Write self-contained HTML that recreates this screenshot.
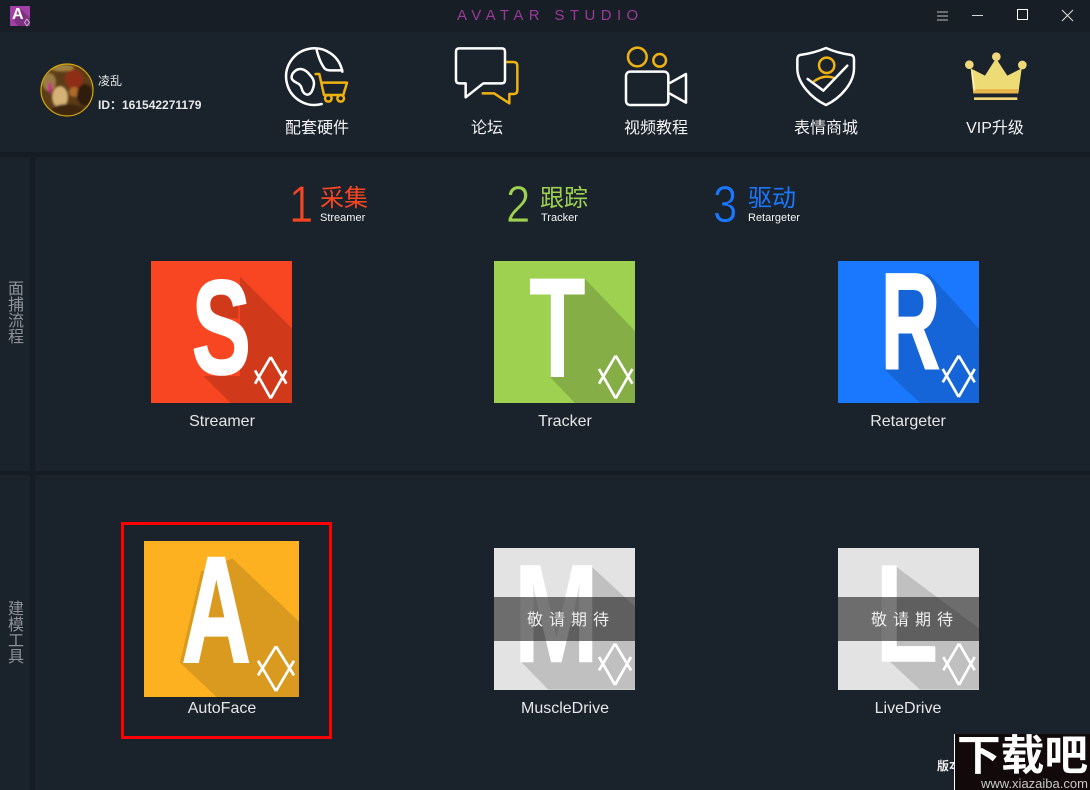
<!DOCTYPE html>
<html lang="zh">
<head>
<meta charset="utf-8">
<title>AVATAR STUDIO</title>
<style>
html,body{margin:0;padding:0;background:#1a222c;}
#app{position:relative;width:1090px;height:790px;overflow:hidden;background:#1a222c;font-family:"Liberation Sans","Noto Sans CJK SC",sans-serif;color:#f0f0f0;}
.a{position:absolute;white-space:nowrap;}
.nav{top:119px;width:120px;text-align:center;font-size:16px;line-height:20px;color:#f2f2f2;}
.lbl{width:160px;text-align:center;font-size:16px;line-height:20px;color:#e6e6e6;}
.side{left:8px;width:16px;font-size:16px;line-height:16px;color:#8f9396;white-space:normal;text-align:center;}
.num{font-size:52px;line-height:52px;top:179px;transform:scaleX(.84);transform-origin:0 0;-webkit-text-stroke:.8px #1a222c;}
.cn{font-size:24px;line-height:28px;top:185px;}
.sub{font-size:11px;line-height:13px;top:212px;color:#f5f5f5;}
.soon{font-size:16px;line-height:20px;color:#eee;letter-spacing:6px;top:611px;}
svg{position:absolute;left:0;top:0;}
</style>
</head>
<body>
<div id="app">
<svg width="1090" height="790" viewBox="0 0 1090 790" fill="none">
  <defs>
    <filter id="b" x="-30%" y="-30%" width="160%" height="160%"><feGaussianBlur stdDeviation="1.1"/></filter>
    <clipPath id="av"><circle cx="67" cy="90" r="26"/></clipPath>
  </defs>
  <!-- bars -->
  <rect x="0" y="0" width="1090" height="32" fill="#171e26"/>
  <rect x="0" y="152" width="1090" height="5" fill="#161c24"/>
  <rect x="0" y="471" width="1090" height="4" fill="#161c24"/>
  <rect x="30" y="157" width="5" height="633" fill="#161c24"/>
  <!-- app icon -->
  <rect x="10" y="6" width="20" height="20" fill="#a23fa6"/>
  <polygon points="21,9 30,18 30,26 18,26 14,21" fill="#7d3180"/>
  <path d="M27 19 L24.5 22.5 L27 26 L29.5 22.5Z" stroke="#e8d0e8" stroke-width=".7"/>
  <!-- window controls -->
  <g fill="#6a6d70"><rect x="937" y="11" width="11" height="2"/><rect x="937" y="15" width="11" height="2"/><rect x="937" y="19" width="11" height="2"/></g>
  <rect x="972" y="15" width="11" height="1" fill="#d8d8d8"/>
  <rect x="1017.5" y="9.5" width="10" height="10" stroke="#fff" stroke-width="1"/>
  <path d="M1062 10 L1073 21 M1073 10 L1062 21" stroke="#e0e0e0" stroke-width="1"/>
  <!-- avatar -->
  <g clip-path="url(#av)">
    <rect x="41" y="64" width="52" height="52" fill="#5c3d18"/>
    <g filter="url(#b)">
      <ellipse cx="49" cy="82" rx="7" ry="9" fill="#9a7c45"/>
      <ellipse cx="60" cy="97" rx="8" ry="11" fill="#d4b274"/>
      <ellipse cx="74" cy="79" rx="9" ry="10" fill="#8f2f16"/>
      <ellipse cx="74" cy="92" rx="5" ry="5" fill="#b06a2c"/>
      <ellipse cx="85" cy="95" rx="8" ry="11" fill="#2e1c10"/>
      <ellipse cx="68" cy="110" rx="16" ry="6" fill="#3c2610"/>
      <ellipse cx="50" cy="88" rx="1.8" ry="6" fill="#c8208a"/>
      <ellipse cx="62" cy="68" rx="12" ry="3.5" fill="#a08040"/>
    </g>
  </g>
  <circle cx="67" cy="90" r="26" stroke="#d4a90a" stroke-width="1.2"/>
  <!-- globe + cart -->
  <g transform="scale(.33333)" stroke-width="7.5" stroke-linejoin="round" stroke-linecap="round">
    <path d="M965 312 A85 85 0 1 1 1027 215" stroke="#fff"/>
    <path d="M950 150 C955 170 960 185 970 200 Q975 211 990 211 L1027 211" stroke="#fff"/>
    <path d="M880 218 C895 200 915 205 930 225 C945 240 945 255 935 275 C925 290 910 285 905 265 C900 245 880 250 875 235 Q874 225 880 218Z" stroke="#fff"/>
    <path d="M947 222 H958 L972 285 H1030 L1041 248 H965" stroke="#eeb211"/>
    <circle cx="985" cy="295" r="10" stroke="#eeb211"/>
    <circle cx="1022" cy="295" r="10" stroke="#eeb211"/>
  </g>
  <!-- forum -->
  <g transform="translate(420 0) scale(.33333)" stroke-width="7.5" stroke-linejoin="round">
    <path d="M118 145 H245 Q255 145 255 155 V240 Q255 250 245 250 H190 L137 292 V250 H118 Q108 250 108 240 V155 Q108 145 118 145Z" stroke="#fff"/>
    <path d="M258 186 H280 Q292 186 292 198 V270 Q292 282 280 282 H268 V310 L222 280 H185" stroke="#eeb211"/>
  </g>
  <!-- video -->
  <g transform="translate(420 0) scale(.33333)" stroke-width="7.5" stroke-linejoin="round">
    <circle cx="652" cy="171" r="28" stroke="#eeb211"/>
    <circle cx="719" cy="181" r="19" stroke="#eeb211"/>
    <rect x="618" y="215" width="127" height="100" rx="12" stroke="#fff"/>
    <path d="M748 250 L798 222 V308 L748 280" stroke="#fff"/>
  </g>
  <!-- shield -->
  <g transform="translate(770 0) scale(.33333)" stroke-width="7.5" stroke-linecap="round" stroke-linejoin="round">
    <path d="M168 144 Q130 160 90 165 Q82 167 82 178 V205 C82 250 125 295 168 315 C210 295 252 250 252 205 V178 Q252 167 244 165 Q205 160 168 144Z" stroke="#fff"/>
    <circle cx="170" cy="196" r="23" stroke="#eeb211"/>
    <path d="M133 243 Q165 222 195 235" stroke="#eeb211"/>
    <path d="M113 237 L160 272 L232 197" stroke="#fff"/>
  </g>
  <!-- crown -->
  <g transform="translate(770 0) scale(.33333)">
    <polygon points="602,205 645,227 678,175 712,227 755,205 745,280 610,280" fill="#eddb75"/>
    <polygon points="609,267 747,267 745,280 610,280" fill="#e8b44c"/>
    <path d="M606 215 L614 272" stroke="#fff6d0" stroke-width="3.5"/>
    <circle cx="598" cy="194" r="13" fill="#efd77a"/>
    <circle cx="679" cy="170" r="13" fill="#efd77a"/>
    <circle cx="757" cy="195" r="13" fill="#efd77a"/>
    <rect x="612" y="292" width="130" height="8" fill="#efd77a"/>
  </g>

  <!-- Streamer tile -->
  <rect x="151" y="261" width="141" height="142" fill="#f74621"/>
  <g transform="translate(140 250) scale(.33333)">
    <polygon points="300,80 456,235 456,459 272,459 190,378 300,378 300,100" fill="#d03a1a"/>
    <rect x="205" y="118" width="90" height="87" fill="#d03a1a"/>
  </g>
  <text transform="translate(221.3 373.5) scale(.66 1)" text-anchor="middle" font-family="Liberation Sans" font-weight="700" font-size="134" fill="#fff" stroke="#fff" stroke-width="2">S</text>
  <path transform="translate(270.7 377.7) scale(.33333)" d="M0 -62 L-47 18 M-47 -22 L0 62 M0 -62 L47 18 M47 -22 L0 62" stroke="#fff" stroke-width="8"/>

  <!-- Tracker tile -->
  <rect x="494" y="261" width="141" height="142" fill="#9ed150"/>
  <g transform="translate(480 250) scale(.33333)">
    <polygon points="314,86 465,243 465,459 285,459 210,381 210,131 314,131" fill="#86ae47"/>
  </g>
  <text transform="translate(557.3 377) scale(.65 1)" text-anchor="middle" font-family="Liberation Sans" font-weight="700" font-size="143" fill="#fff">T</text>
  <path transform="translate(615.7 377) scale(.33333)" d="M0 -64 L-50 20 M-50 -24 L0 64 M0 -64 L50 20 M50 -24 L0 64" stroke="#fff" stroke-width="8"/>

  <!-- Retargeter tile -->
  <rect x="838" y="261" width="141" height="142" fill="#1a78fe"/>
  <g transform="translate(825 250) scale(.33333)">
    <polygon points="310,70 462,237 462,459 285,459 178,358 222,114" fill="#1565d8"/>
  </g>
  <text transform="translate(910.5 368.8) scale(.6 1)" text-anchor="middle" font-family="Liberation Sans" font-weight="700" font-size="138" fill="#fff" stroke="#fff" stroke-width="1.5">R</text>
  <path transform="translate(958.7 376.3) scale(.33333)" d="M0 -62 L-48 18 M-48 -22 L0 62 M0 -62 L48 18 M48 -22 L0 62" stroke="#fff" stroke-width="8"/>

  <!-- AutoFace tile -->
  <rect x="122.5" y="523.5" width="208" height="214" stroke="#f00" stroke-width="3"/>
  <rect x="144" y="541" width="155" height="156" fill="#fdb120"/>
  <g transform="translate(115 515) scale(.33333)">
    <polygon points="352,130 552,320 552,546 305,546 195,443 258,170" fill="#da991f"/>
  </g>
  <text transform="translate(216.3 661.5) scale(.63 1)" text-anchor="middle" font-family="Liberation Sans" font-weight="700" font-size="150" fill="#fff" stroke="#fff" stroke-width="3">A</text>
  <path transform="translate(276 668.7) scale(.33333)" d="M0 -67 L-54 20 M-54 -24 L0 67 M0 -67 L54 20 M54 -24 L0 67" stroke="#fff" stroke-width="8"/>

  <!-- MuscleDrive tile -->
  <rect x="494" y="548" width="141" height="142" fill="#e3e3e3"/>
  <g transform="translate(480 540) scale(.33333)">
    <polygon points="335,80 465,200 465,449 205,449 125,367 170,230 230,290 290,230" fill="#c0c0c0"/>
  </g>
  <text transform="translate(556.3 662.3) scale(.73 1)" text-anchor="middle" font-family="Liberation Sans" font-weight="700" font-size="141" fill="#fff">M</text>
  <path transform="translate(615 664.3) scale(.33333)" d="M0 -62 L-48 18 M-48 -22 L0 62 M0 -62 L48 18 M48 -22 L0 62" stroke="#fff" stroke-width="8"/>
  <rect x="494" y="597" width="141" height="44" fill="#1e1e1e" fill-opacity=".6"/>

  <!-- LiveDrive tile -->
  <rect x="838" y="548" width="141" height="142" fill="#e3e3e3"/>
  <g transform="translate(825 540) scale(.33333)">
    <polygon points="213,80 462,265 462,449 285,449 195,365 332,365 332,322 213,322" fill="#c0c0c0"/>
  </g>
  <text transform="translate(906.5 661.7) scale(.74 1)" text-anchor="middle" font-family="Liberation Sans" font-weight="700" font-size="140" fill="#fff">L</text>
  <path transform="translate(959 664.3) scale(.33333)" d="M0 -62 L-47 18 M-47 -22 L0 62 M0 -62 L47 18 M47 -22 L0 62" stroke="#fff" stroke-width="8"/>
  <rect x="838" y="597" width="141" height="44" fill="#1e1e1e" fill-opacity=".6"/>
</svg>

<div class="a" style="left:12px;top:5px;font-size:16px;line-height:20px;font-weight:700;color:#fff;">A</div>
<div class="a" style="left:457px;top:7px;font-size:15px;line-height:18px;letter-spacing:5.4px;color:#9a3a9a;">AVATAR STUDIO</div>

<div class="a" style="left:98px;top:73px;font-size:12px;line-height:16px;color:#e8e8e8;">凌乱</div>
<div class="a" style="left:98px;top:97px;font-size:12px;line-height:16px;font-weight:700;color:#e8e8e8;">ID：161542271179</div>

<div class="a nav" style="left:257px;">配套硬件</div>
<div class="a nav" style="left:427px;">论坛</div>
<div class="a nav" style="left:596px;">视频教程</div>
<div class="a nav" style="left:766px;">表情商城</div>
<div class="a nav" style="left:935px;">VIP升级</div>

<div class="a side" style="top:282px;">面捕流程</div>
<div class="a side" style="top:602px;">建模工具</div>

<div class="a num" style="left:289px;color:#f74621;">1</div>
<div class="a cn" style="left:320px;color:#f74621;">采集</div>
<div class="a sub" style="left:320px;">Streamer</div>
<div class="a num" style="left:506px;color:#9ed150;">2</div>
<div class="a cn" style="left:540px;color:#9ed150;">跟踪</div>
<div class="a sub" style="left:541px;">Tracker</div>
<div class="a num" style="left:713px;color:#1a78fe;">3</div>
<div class="a cn" style="left:748px;color:#1a78fe;">驱动</div>
<div class="a sub" style="left:748px;">Retargeter</div>

<div class="a lbl" style="left:142px;top:412px;">Streamer</div>
<div class="a lbl" style="left:485px;top:412px;">Tracker</div>
<div class="a lbl" style="left:828px;top:412px;">Retargeter</div>
<div class="a lbl" style="left:142px;top:699px;">AutoFace</div>
<div class="a lbl" style="left:485px;top:699px;">MuscleDrive</div>
<div class="a lbl" style="left:828px;top:699px;">LiveDrive</div>

<div class="a soon" style="left:527px;">敬请期待</div>
<div class="a soon" style="left:871px;">敬请期待</div>

<div class="a" style="left:937px;top:758px;font-size:12px;line-height:16px;font-weight:700;color:#eee;">版本</div>

<div class="a" style="left:954px;top:734px;width:136px;height:56px;background:#120a0a;border-left:1px solid #fff;overflow:hidden;box-sizing:border-box;">
  <div class="a" style="left:0;top:-9px;width:135px;font-family:'Noto Sans CJK SC',sans-serif;font-weight:700;font-size:42px;line-height:56px;color:#fff;text-align:center;transform:scaleX(1.04);">下载吧</div>
  <div class="a" style="left:26px;top:42px;font-size:13px;line-height:15px;color:#c8c8c8;">www.xiazaiba.com</div>
</div>
</div>
</body>
</html>
